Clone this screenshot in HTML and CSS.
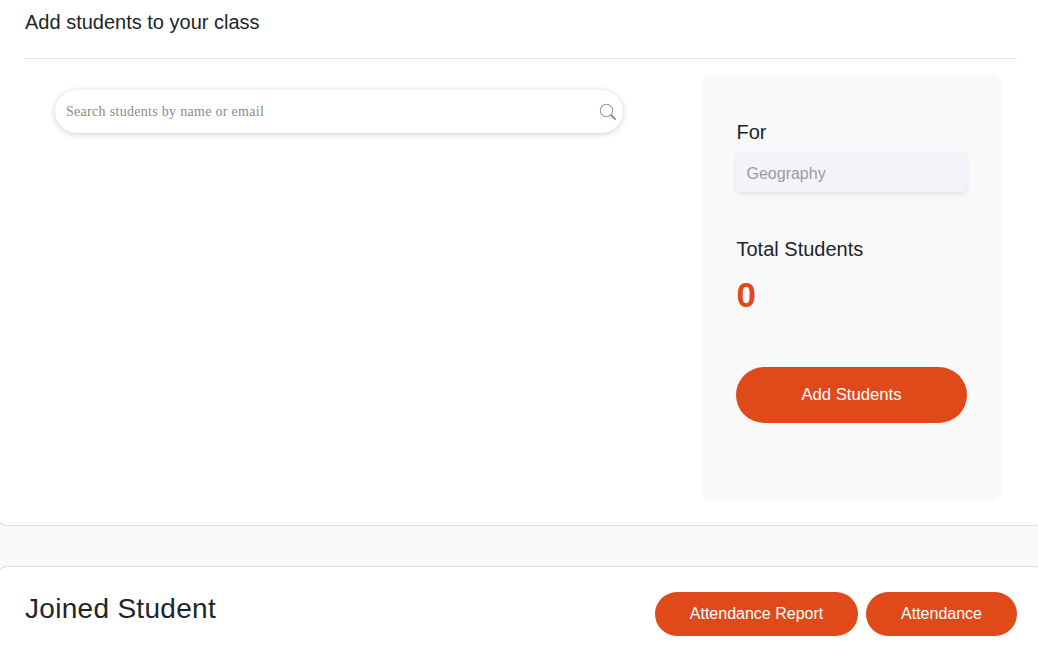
FILE: index.html
```html
<!DOCTYPE html>
<html lang="en">
<head>
<meta charset="utf-8">
<title>Add students</title>
<link rel="stylesheet" href="styles.css">
</head>
<body>
<section class="card add-card">
  <h2 class="add-title">Add students to your class</h2>
  <div class="add-body">
    <div class="search-col">
      <div class="search">
        <input class="search-input" type="text" placeholder="Search students by name or email">
        <svg class="search-icon" width="18" height="18" viewBox="0 0 18 18" fill="none">
          <circle cx="7.5" cy="7.5" r="6.2" stroke="#999" stroke-width="1.1"/>
          <path d="M12 12l4.6 4.6" stroke="#888" stroke-width="1.8"/>
        </svg>
      </div>
    </div>
    <aside class="panel">
      <div class="label for-label">For</div>
      <div class="subject">Geography</div>
      <div class="label total-label">Total Students</div>
      <div class="count">0</div>
      <button class="btn btn-add">Add Students</button>
    </aside>
  </div>
</section>
<section class="card joined-card">
  <h2 class="joined-title">Joined Student</h2>
  <div class="actions">
    <button class="btn btn-report">Attendance Report</button>
    <button class="btn btn-attendance">Attendance</button>
  </div>
</section>
</body>
</html>
```
FILE: styles.css
```css
* { box-sizing: border-box; }
html, body { height: 100%; }
body {
  margin: 0;
  height: 651px;
  overflow: hidden;
  background: #f9f9f9;
  font-family: "Liberation Sans", Arial, sans-serif;
  color: #212529;
}
.card {
  background: #fff;
  border: 1px solid #dedede;
  margin-left: -3px;
  margin-right: -7px;
}
.add-card {
  height: 526px;
  border-top: 0;
  border-radius: 0 0 10px 10px;
  padding: 0 27px 0 27px;
}
.add-title {
  margin: 0;
  height: 59px;
  padding-top: 10px;
  font-size: 20px;
  line-height: 24px;
  font-weight: 400;
  border-bottom: 1px solid #e4e4e4;
}
.add-body {
  display: flex;
  justify-content: space-between;
  padding: 16px 15px 0 30px;
}
.search-col { width: 568px; padding-top: 15px; }
.search {
  position: relative;
  height: 43px;
  border-radius: 22px;
  background: #fff;
  box-shadow: 0 1px 6px rgba(0, 0, 0, 0.2);
}
.search-input {
  width: 100%;
  height: 100%;
  border: 0;
  outline: 0;
  background: transparent;
  padding: 0 40px 0 11px;
  font-family: "Liberation Serif", "Times New Roman", serif;
  font-size: 14px;
  letter-spacing: 0.3px;
}
.search-input::placeholder { color: #8b8b8b; opacity: 1; }
.search-icon { position: absolute; right: 6px; top: 13px; }
.panel {
  width: 301px;
  height: 425px;
  background: #f9f9f9;
  border-radius: 10px;
  padding: 45px 35px 0;
}
.label {
  font-size: 20px;
  line-height: 24px;
  padding-left: 0.5px;
}
.subject {
  height: 40px;
  margin-top: 8px;
  padding-left: 10.5px;
  line-height: 43px;
  font-size: 16px;
  color: #9a9aa2;
  background: #f3f3f9;
  border-radius: 5px;
  box-shadow: 0 2px 5px rgba(0, 0, 0, 0.09);
}
.total-label { margin-top: 45px; }
.count {
  margin-top: 13px;
  padding-left: 0.5px;
  font-size: 35px;
  line-height: 42px;
  font-weight: 700;
  color: #e04a1b;
}
.btn {
  display: block;
  border: 0;
  padding: 0;
  color: #fff;
  background: #e04a1b;
  font-family: "Liberation Sans", Arial, sans-serif;
  font-size: 16px;
}
.btn-add {
  width: 100%;
  height: 56px;
  margin-top: 51px;
  border-radius: 28px;
  font-size: 16.7px;
}
.joined-card {
  height: 90px;
  margin-top: 40px;
  border-bottom: 0;
  border-radius: 10px 10px 0 0;
  padding: 25px 27px 0 27px;
  display: flex;
  justify-content: space-between;
  align-items: flex-start;
}
.joined-title {
  margin: 0;
  font-size: 28px;
  line-height: 34px;
  font-weight: 400;
  letter-spacing: 0.3px;
}
.actions { display: flex; gap: 8px; }
.actions .btn { height: 44px; border-radius: 22px; }
.btn-report { width: 203px; }
.btn-attendance { width: 151px; }
```
